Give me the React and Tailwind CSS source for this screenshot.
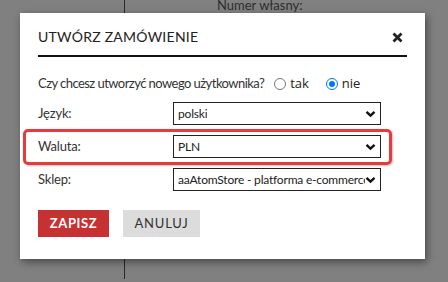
import React from "react";

function Chevron() {
  return (
    <svg width="11" height="8" viewBox="0 0 11 8" className="shrink-0">
      <path d="M1.5 1.8 L5.5 5.6 L9.5 1.8" fill="none" stroke="#111" strokeWidth="2.4" />
    </svg>
  );
}

function Select({ value }) {
  return (
    <div className="flex h-[23px] w-[208px] items-center justify-between border border-[#222] bg-white pl-[4px] pr-[4px]">
      <span className="overflow-hidden whitespace-nowrap text-[12px] tracking-[-0.2px] text-[#222]" style={{ fontFamily: "Lato, sans-serif" }}>
        {value}
      </span>
      <Chevron />
    </div>
  );
}

function Row({ label, value }) {
  return (
    <div className="flex items-center">
      <div className="w-[135px] text-[13px] tracking-[-0.2px] text-[#333]">{label}</div>
      <Select value={value} />
    </div>
  );
}

export default function App() {
  return (
    <div className="relative h-[282px] w-[448px] overflow-hidden bg-[#808080]" style={{ fontFamily: "Lato, sans-serif" }}>
      {/* background page */}
      <div className="absolute left-[124px] top-0 h-[279px] w-px bg-[#2a2a2a]" />
      <div className="absolute left-[217px] top-[-3px] text-[13px] leading-[16px] text-[#2e2e2e]">Numer własny:</div>

      {/* dialog */}
      <div className="absolute left-[20px] top-[13px] h-[246px] w-[405px] bg-white px-[18px] shadow-[2px_3px_8px_rgba(0,0,0,0.45)]">
        <div className="flex items-center justify-between border-b-2 border-[#111] pb-[9px] pt-[15px]">
          <span className="text-[14px] leading-[18px] tracking-[0.25px] text-[#222]">UTWÓRZ ZAMÓWIENIE</span>
          <svg width="11" height="11" viewBox="0 0 11 11" className="mr-[4px]">
            <path d="M1.5 1.5 L9.5 9.5 M9.5 1.5 L1.5 9.5" stroke="#222" strokeWidth="2.8" />
          </svg>
        </div>

        <div className="mt-[18px] flex h-[18px] items-center text-[13px] text-[#333]">
          <span className="tracking-[-0.55px]">Czy chcesz utworzyć nowego użytkownika?</span>
          <span className="ml-[10px] flex items-center">
            <span className="h-[12px] w-[12px] rounded-full border border-[#767676] bg-white" />
            <span className="ml-[4px] text-[13px] text-[#222]" style={{ fontFamily: "'Open Sans', sans-serif" }}>tak</span>
          </span>
          <span className="ml-[17px] flex items-center">
            <span className="flex h-[12px] w-[12px] items-center justify-center rounded-full border-[1.5px] border-[#0075ff] bg-white">
              <span className="h-[6px] w-[6px] rounded-full bg-[#0075ff]" />
            </span>
            <span className="ml-[4px] text-[13px] text-[#222]" style={{ fontFamily: "'Open Sans', sans-serif" }}>nie</span>
          </span>
        </div>

        <div className="mt-[9px] flex flex-col gap-[10px]">
          <Row label="Język:" value="polski" />
          <div className="relative">
            <div className="absolute left-[-15px] right-[15px] top-[-6px] bottom-[-7px] rounded-[5px] border-[3px] border-[#e83a3a] shadow-[1px_1px_2px_rgba(0,0,0,0.25)]" />
            <Row label="Waluta:" value="PLN" />
          </div>
          <Row label="Sklep:" value="aaAtomStore - platforma e-commerce" />
        </div>

        <div className="mt-[19px] flex gap-[14px]">
          <button className="h-[27px] w-[71px] bg-[#c63232] text-[13px] font-bold tracking-[0.6px] text-white">ZAPISZ</button>
          <button className="h-[27px] w-[77px] bg-[#dcdcdc] text-[13px] tracking-[0.8px] text-[#333]">ANULUJ</button>
        </div>
      </div>
    </div>
  );
}
